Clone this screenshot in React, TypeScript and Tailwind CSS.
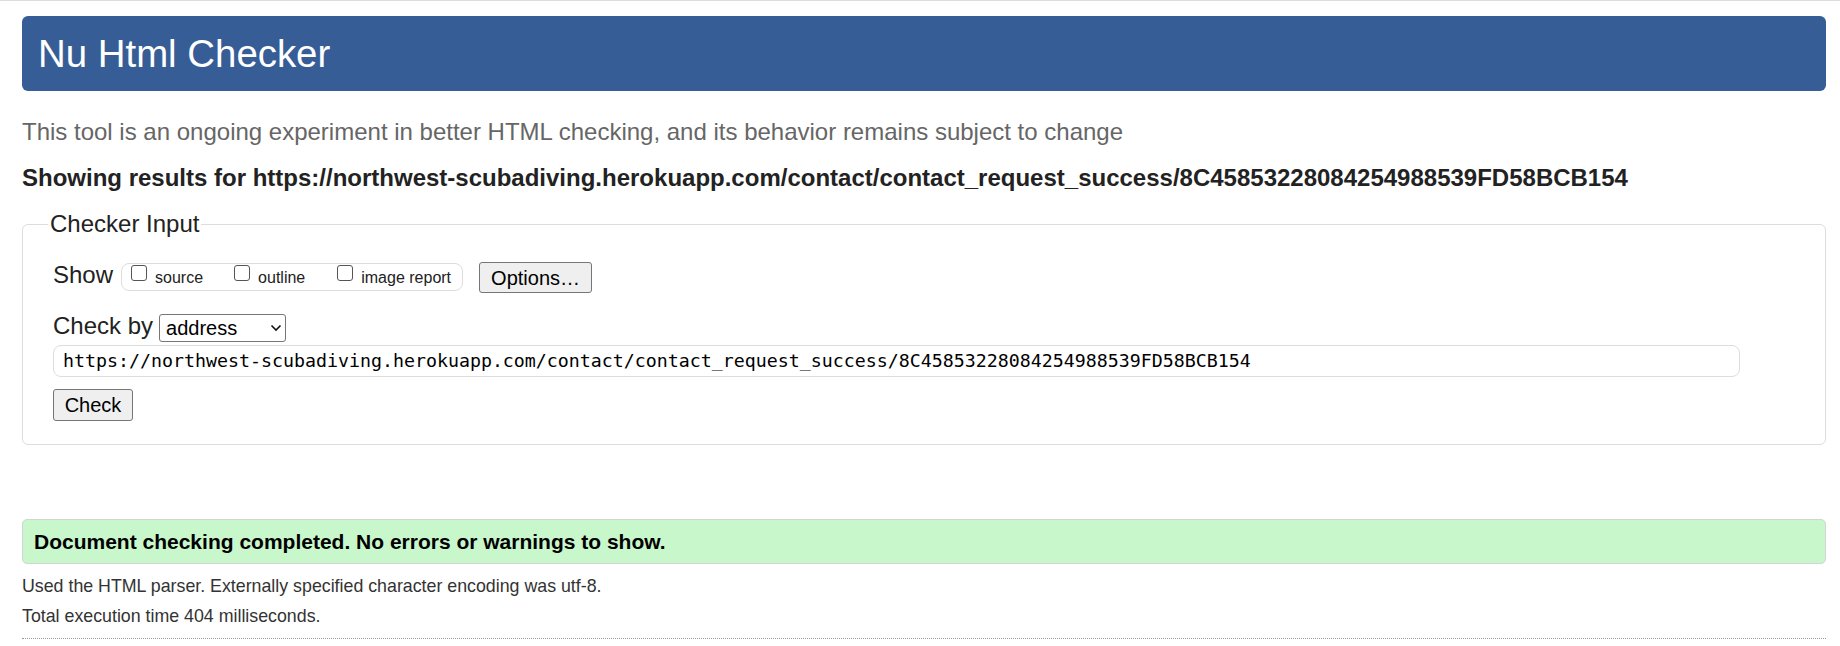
import React from "react";

function Box({ label }: { label: string }) {
  return (
    <span className="flex items-center">
      <span className="self-start mt-[-1px] inline-block h-[16px] w-[16px] rounded-[3px] border border-[#555] bg-white" />
      <span className="ml-[8px] pt-[2px] text-[16px] leading-[20px] text-[#222]">{label}</span>
    </span>
  );
}

export default function App() {
  return (
    <div className="min-h-[646px] bg-white border-t border-[#dddddd] pl-[22px] pr-[14px] pt-[15px] font-['Liberation_Sans',Arial,sans-serif] text-[#222]">
      <h1 className="h-[75px] rounded-[6px] bg-[#365d95] pl-[16px] text-[38.4px] leading-[75px] text-white">
        Nu Html Checker
      </h1>
      <p className="mt-[26px] text-[24px] leading-[30px] text-[#666]">
        This tool is an ongoing experiment in better HTML checking, and its behavior remains subject to change
      </p>
      <p className="mt-[16px] text-[24px] leading-[30px] font-bold text-[#222]">
        Showing results for https://northwest-scubadiving.herokuapp.com/contact/contact_request_success/8C45853228084254988539FD58BCB154
      </p>
      <fieldset className="mt-[16px] rounded-[6px] border border-[#dddddd] pl-[30px] pb-[23px]">
        <legend className="ml-[-5px] px-[2px] text-[24px] leading-[30px] text-[#222]">Checker Input</legend>
        <div className="mt-[23px] flex items-start">
          <span className="mt-[1px] text-[24px] leading-[24px]">Show</span>
          <div className="ml-[8px] mt-[1px] flex h-[28px] w-[342px] items-center rounded-[8px] border border-[#dddddd] pl-[9px]">
            <Box label="source" />
            <span className="ml-[31px]">
              <Box label="outline" />
            </span>
            <span className="ml-[32px]">
              <Box label="image report" />
            </span>
          </div>
          <div className="ml-[16px] flex h-[31px] w-[113px] items-center justify-center rounded-[3px] border border-[#767676] bg-[#efefef] text-[20px] text-black">
            Options…
          </div>
        </div>
        <div className="mt-[21px] flex items-start">
          <span className="text-[24px] leading-[24px]">Check by</span>
          <div className="ml-[6px] flex h-[28px] w-[127px] items-center rounded-[3px] border border-[#767676] bg-white pl-[6px] text-[20px] text-black">
            <span>address</span>
            <svg className="ml-auto mr-[3px]" width="12" height="8" viewBox="0 0 12 8">
              <path d="M1.5 1.5 L6 6 L10.5 1.5" fill="none" stroke="#111" strokeWidth="1.6" />
            </svg>
          </div>
        </div>
        <div className="mt-[3px] flex h-[32px] w-[1687px] items-center rounded-[8px] border border-[#dddddd] pl-[9px] font-['DejaVu_Sans_Mono',monospace] text-[18.27px] text-black">
          https://northwest-scubadiving.herokuapp.com/contact/contact_request_success/8C45853228084254988539FD58BCB154
        </div>
        <div className="mt-[12px] flex h-[32px] w-[80px] items-center justify-center rounded-[3px] border border-[#767676] bg-[#efefef] text-[20px] text-black">
          Check
        </div>
      </fieldset>
      <div className="mt-[74px] flex h-[45px] items-center rounded-[5px] border border-[#d4d4d4] bg-[#c9f7cc] pl-[11px] text-[21px] font-bold text-black">
        Document checking completed. No errors or warnings to show.
      </div>
      <p className="mt-[7px] text-[17.8px] leading-[30px] text-[#333]">
        Used the HTML parser. Externally specified character encoding was utf-8.
      </p>
      <p className="text-[17.8px] leading-[30px] text-[#333]">Total execution time 404 milliseconds.</p>
      <div className="mt-[7px] border-t border-dotted border-[#999]" />
    </div>
  );
}
